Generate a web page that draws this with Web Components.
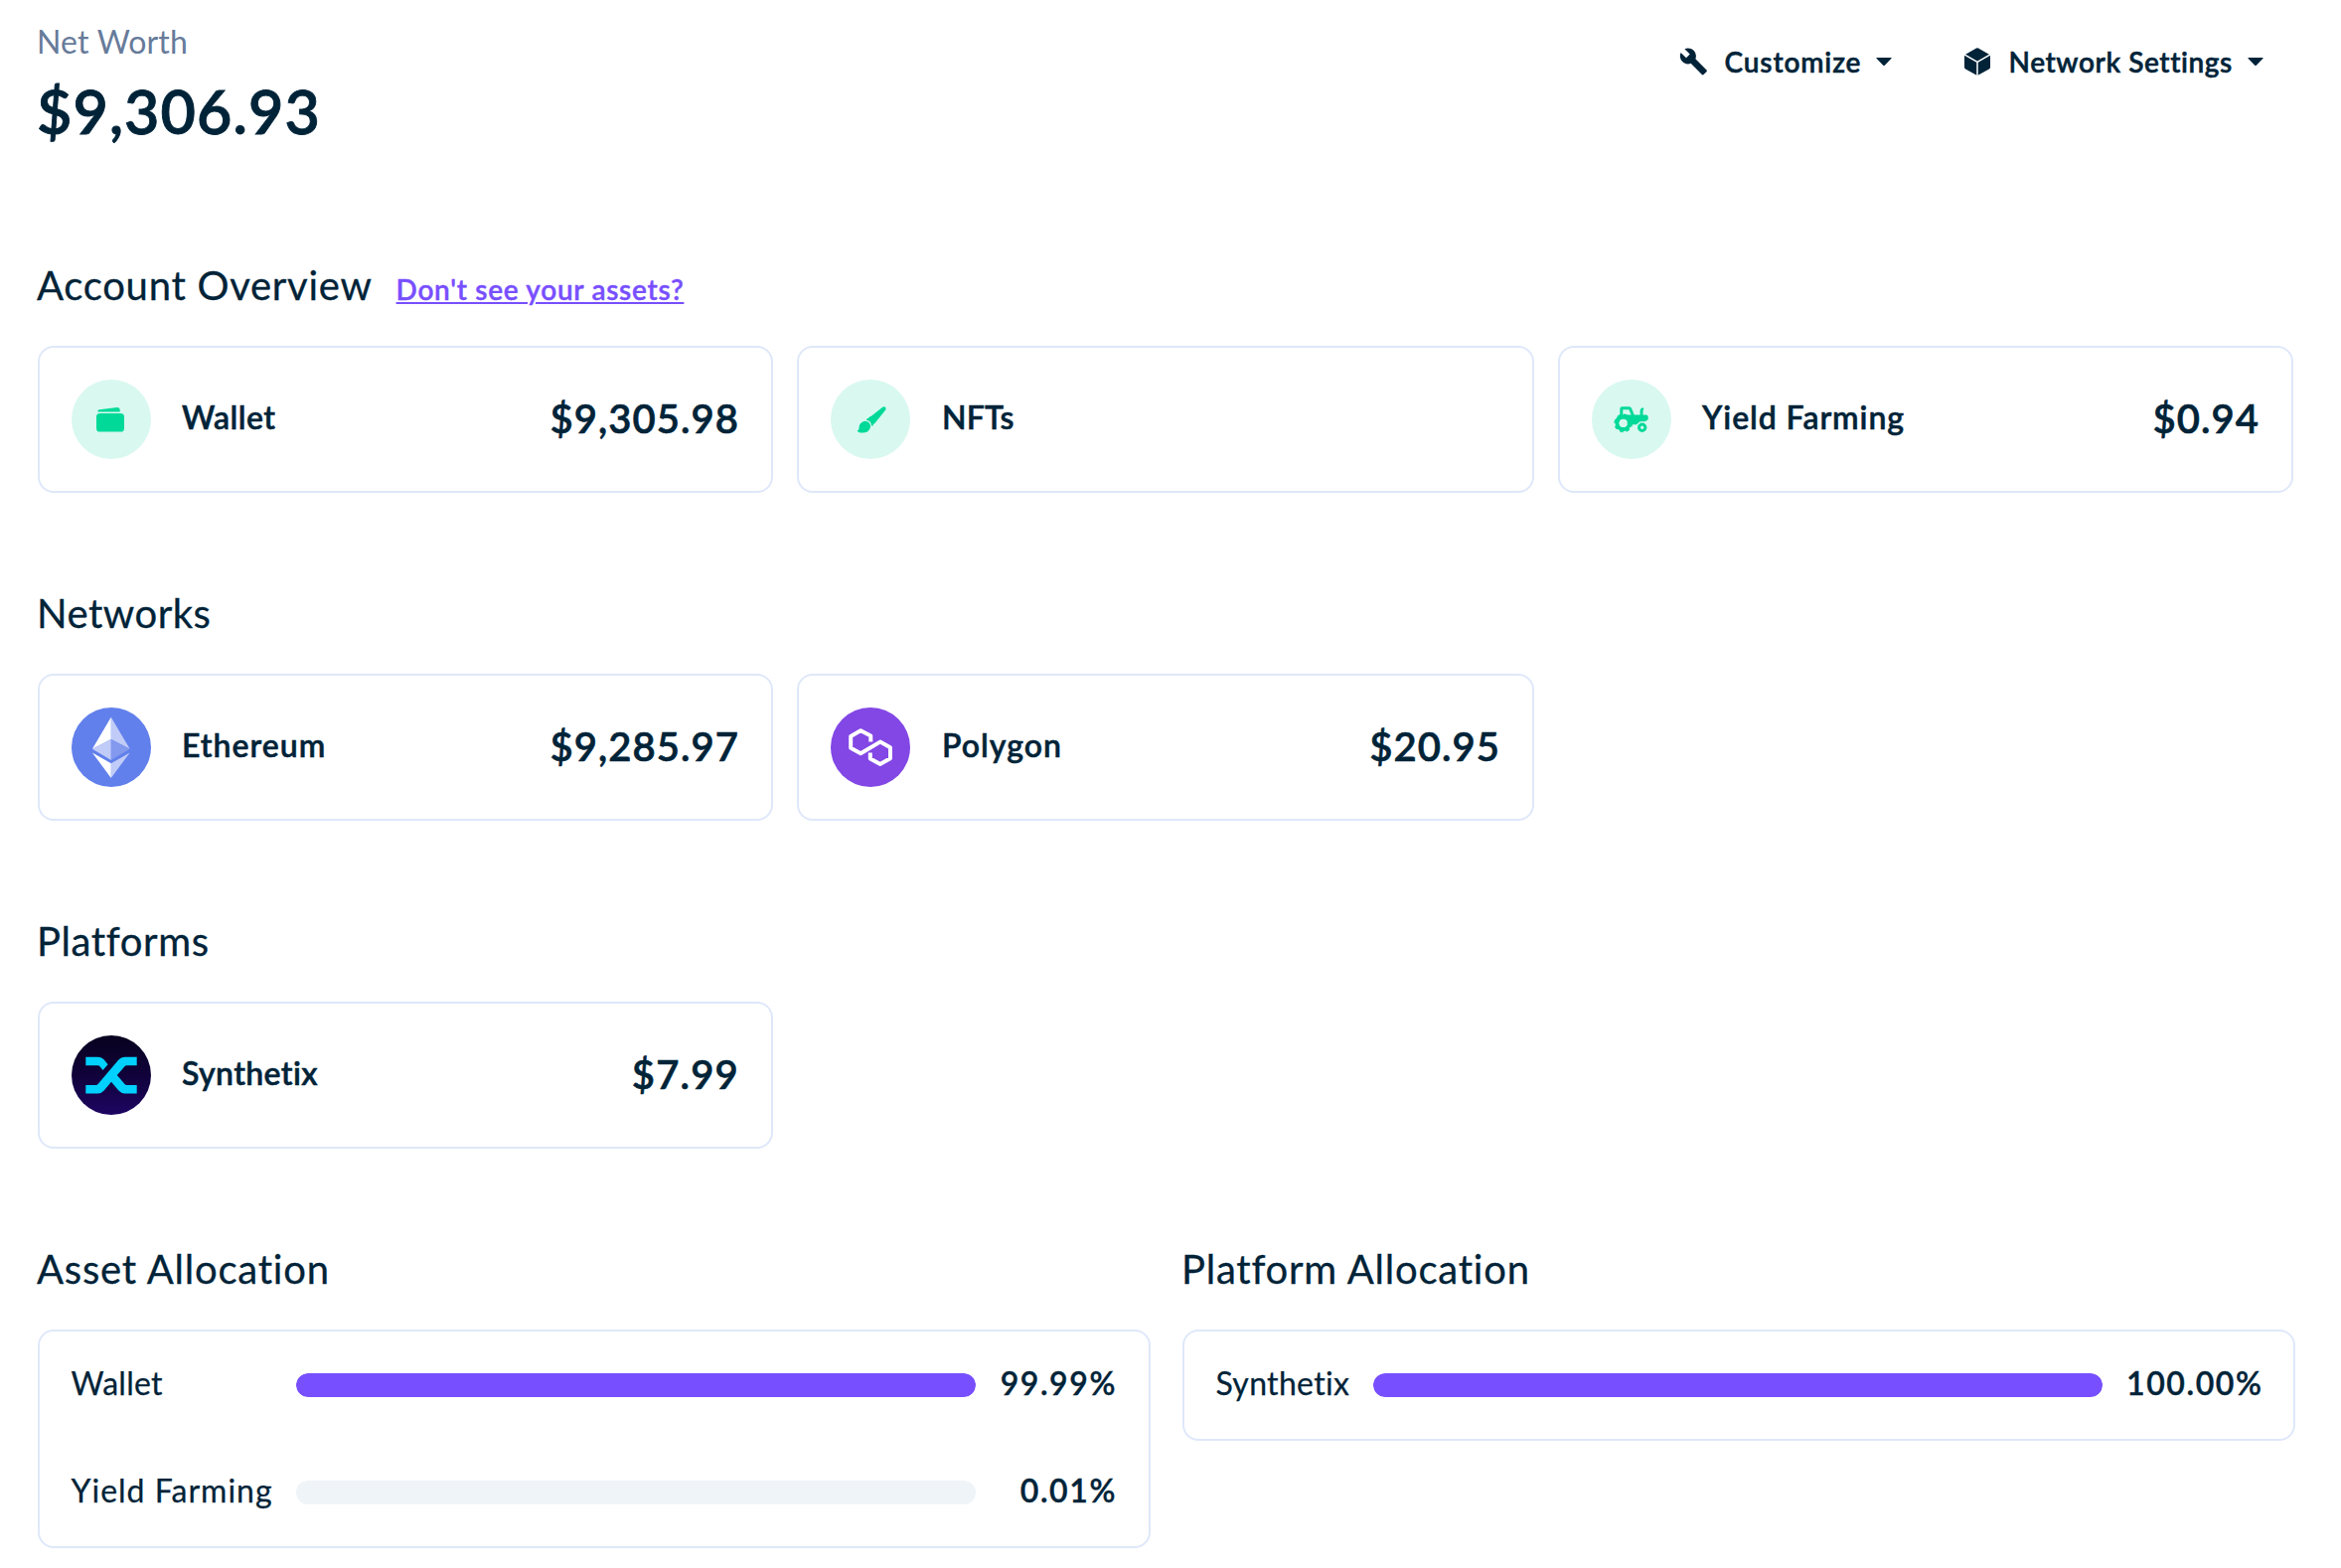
<!DOCTYPE html>
<html lang="en">
<head>
<meta charset="utf-8">
<title>Net Worth Dashboard</title>
<style>
  html, body { margin: 0; background: #fff; }
  body { color: #002338; font-family: Lato, "Open Sans", sans-serif; }
</style>
</head>
<body>
<net-dashboard></net-dashboard>

<script>
const ICONS = {
  wrench: `<svg width="28" height="28" viewBox="0 0 22.8 22.8" fill="currentColor"><path d="M22.4 18.3l-9.1-9.1c.9-2.3.4-5-1.5-6.9-2-2-5-2.4-7.4-1.3l4.3 4.3-3 3-4.4-4.3C.1 6.4.6 9.4 2.6 11.4c1.9 1.9 4.6 2.4 6.9 1.5l9.1 9.1c.4.4 1 .4 1.4 0l2.3-2.3c.5-.4.5-1.1.1-1.4z"/></svg>`,
  cube: `<svg width="26" height="28" viewBox="0 0 26 28"><path d="M12 .6q1-.7 2 0l10.9 6.2q1.1.6 1.1 2v10.6q0 1.3-1.1 2L14 27.500q-1 .6-2 0L1.100 21.400q-1.100-.7-1.100-2V8.800q0-1.400 1.100-2z" fill="currentColor"/><path d="M0 6.900L13 14.300 26 6.900M13 14.300V28" fill="none" stroke="#fff" stroke-width="1.500"/></svg>`,
  caret: `<svg width="16" height="8" viewBox="0 0 16 8"><path d="M.8 0H15.200Q16 .2 15.300 1L9 7.400Q8 8.400 7 7.400L.7 1Q0 .2.8 0z" fill="currentColor"/></svg>`,
  wallet: `<svg viewBox="0 0 80 80"><circle cx="40" cy="40" r="40" fill="#d9f8f0"/><g fill="#00d998"><path d="M26.400 31.200Q26.600 30.700 28 30.300L46 27.900Q48.500 27.900 48.700 30.500V32.400H27Q26 32.200 26.400 31.200z"/><rect x="25" y="33.900" width="28" height="18.600" rx="3.600"/></g></svg>`,
  brush: `<svg viewBox="0 0 80 80"><circle cx="40" cy="40" r="40" fill="#d9f8f0"/><g fill="#00d998"><path d="M52.300 27.700Q53.800 26.600 55 27.700 56.100 28.800 55.300 30.400L44.200 44.200 43.200 44.600 42.300 46.700 40.900 46.300Q41.300 42 36 40.700L36.300 39.400 38.700 38.300 39.300 37.200 40.600 37z"/><path d="M34.600 41.700Q39.600 42 40.200 47.200 39.600 50.500 37 52.400 33 54.200 28.200 52.900L26.600 51.600 28.300 50.400 28.800 46.200Q30.500 42.300 34.600 41.700z"/></g></svg>`,
  tractor: `<svg viewBox="0 0 80 80"><circle cx="40" cy="40" r="40" fill="#d9f8f0"/><g fill="#00d998"><path fill-rule="evenodd" d="M28.300 29.700Q28.300 27.300 30.700 27.300H37.500Q39.400 27.300 40.100 29L42.700 35.400H48.600V31.500Q48.600 29.700 49.800 28.900L50.500 28.400Q51.800 27.900 52.300 29.200 52.300 30 51.600 30.700L51.400 35.400H54.500Q56.700 35.400 56.700 37.500V39.500Q56.700 40.800 55.300 41.300L53 42.300Q48 41 45.500 45.300H31L24 39.500 28.300 35.500zM31.300 30.200V35.500H39.600L37.400 30.200z"/><circle cx="31.700" cy="43.900" r="6.200" fill="none" stroke="#00d998" stroke-width="4"/><circle cx="31.700" cy="43.900" r="8.500" fill="none" stroke="#00d998" stroke-width="1.600" stroke-dasharray="3.600 3.076"/><circle cx="50.700" cy="48.300" r="3.200" fill="none" stroke="#00d998" stroke-width="3"/></g><circle cx="31.700" cy="43.900" r="4.100" fill="#d9f8f0"/></svg>`,
  ethereum: `<svg viewBox="0 0 80 80"><circle cx="40" cy="40" r="40" fill="#6180eb"/><path d="M39.800 9.800L20.900 41.700 39.800 31.900z" fill="#fff"/><path d="M39.800 9.800L58.700 41.700 39.800 31.900z" fill="#c0cbf7"/><path d="M20.900 41.700L39.800 31.900V52.900z" fill="#c0cbf7"/><path d="M58.700 41.700L39.800 31.900V52.900z" fill="#8299ee"/><path d="M20.900 45.400L39.800 56.300V71z" fill="#fff"/><path d="M58.700 45.400L39.800 56.300V71z" fill="#c0cbf7"/></svg>`,
  polygon: `<svg viewBox="0 0 80 80"><circle cx="40" cy="40" r="40" fill="#8247e5"/><path d="M40.300 34.600V28.600L30.200 23.300 20.200 28.900V40.700L30.200 46.300 49.800 34.600 60 40.200V51.200L49.800 57 39.800 51.400V45.400" fill="none" stroke="#fff" stroke-width="4" stroke-linejoin="round"/></svg>`,
  synthetix: `<svg viewBox="0 0 80 80"><defs><linearGradient id="g" x1="0" y1="0" x2="0" y2="1"><stop offset="0" stop-color="#08021e"/><stop offset=".5" stop-color="#10023a"/><stop offset="1" stop-color="#1e0562"/></linearGradient></defs><circle cx="40" cy="40" r="40" fill="url(#g)"/><g fill="#00d1ff"><path d="M14.300 21.700H26.500Q30.500 21.700 32.800 24.600L36.600 29.300 31.600 35 28.300 31Q27.600 30.200 26.600 30.200H14.300z"/><path d="M65.700 21.700V30.200H55.500Q54.300 30.200 53.500 31.200L45.800 40 53.500 49Q54.300 50 55.500 50H65.700V58.400H53.500Q49.800 58.400 47.400 55.600L40 46.700 32.700 55.500Q30.300 58.400 26.500 58.400H14.300V50H24.600Q25.800 50 26.600 49L47.400 24.500Q49.800 21.700 53.500 21.700z"/></g></svg>`
};

/* Attaches an open shadow root holding the given markup. */
function mount(host, html) {
  host.attachShadow({ mode: 'open' }).innerHTML = html;
}

customElements.define('ui-icon', class extends HTMLElement {
  connectedCallback() {
    mount(this, `<style>:host{display:block;flex:none}svg{display:block}</style>${ICONS[this.getAttribute('name')]}`);
  }
});

/* Dropdown trigger: icon, label, caret. */
customElements.define('menu-button', class extends HTMLElement {
  connectedCallback() {
    mount(this, `<style>
      :host{display:flex;align-items:center;height:40px;font-size:28px;font-weight:600;line-height:40px;-webkit-text-stroke:.5px}
      .label{white-space:nowrap;flex:1;padding-bottom:1px}
    </style>
    <ui-icon name="${this.getAttribute('icon')}"></ui-icon>
    <span class="label"><slot></slot></span>
    <ui-icon name="caret"></ui-icon>`);
  }
});

customElements.define('net-worth', class extends HTMLElement {
  connectedCallback() {
    mount(this, `<style>
      :host{display:flex;flex-direction:column;gap:14px}
      .title{font-size:32px;line-height:40px;color:#677b9a;letter-spacing:.18px;margin-left:-1px}
      .value{font-size:61px;line-height:72px;font-weight:600;letter-spacing:1.09px;margin-left:-1px;-webkit-text-stroke:.9px}
    </style>
    <div class="title">Net Worth</div>
    <div class="value"><slot></slot></div>`);
  }
});

/* Section with a heading row (title plus optional link) above its content. */
customElements.define('page-section', class extends HTMLElement {
  connectedCallback() {
    mount(this, `<style>
      :host{display:block}
      .head{display:flex;align-items:baseline;height:46px;padding-top:1px;margin:0 0 38px -1px;font-size:40px;line-height:46px;white-space:nowrap}
      h2{margin:0;font:inherit;letter-spacing:var(--track,.6px);-webkit-text-stroke:.3px}
    </style>
    <div class="head"><h2>${this.getAttribute('heading')}</h2><slot name="link"></slot></div>
    <slot></slot>`);
  }
});

customElements.define('help-link', class extends HTMLElement {
  connectedCallback() {
    mount(this, `<style>
      :host{display:block;margin-left:24px;font-size:28px;font-weight:600;letter-spacing:.7px;-webkit-text-stroke:.4px}
      a{color:#784fff;text-decoration:underline;text-decoration-thickness:2px;text-underline-offset:2px}
    </style><a><slot></slot></a>`);
  }
});

customElements.define('card-grid', class extends HTMLElement {
  connectedCallback() {
    mount(this, `<style>:host{display:grid;grid-template-columns:1fr 742px 1fr;gap:24px;width:2270px}</style><slot></slot>`);
  }
});

customElements.define('balance-card', class extends HTMLElement {
  connectedCallback() {
    mount(this, `<style>
      :host{display:flex;align-items:center;box-sizing:border-box;height:148px;padding:0 32px;border:2px solid #dfe8fa;border-radius:16px;font-weight:600;white-space:nowrap}
      ui-icon{width:80px;height:80px;margin-right:var(--gap,31px)}
      .name{flex:1;font-size:32px;line-height:40px;padding-bottom:5px;letter-spacing:var(--track);-webkit-text-stroke:.5px}
      .amount{font-size:40px;line-height:48px;padding-bottom:2px;letter-spacing:var(--amount-track,1.05px);-webkit-text-stroke:.6px}
    </style>
    <ui-icon name="${this.getAttribute('icon')}"></ui-icon>
    <span class="name"><slot></slot></span>
    <span class="amount">${this.getAttribute('amount') || ''}</span>`);
  }
});

customElements.define('allocation-panel', class extends HTMLElement {
  connectedCallback() {
    mount(this, `<style>:host{display:block;border:2px solid #dfe8fa;border-radius:16px;padding:0 32px}</style><slot></slot>`);
  }
});

customElements.define('allocation-row', class extends HTMLElement {
  connectedCallback() {
    const pct = this.getAttribute('percent');
    mount(this, `<style>
      :host{display:grid;grid-template-columns:var(--cols);column-gap:24px;align-items:center;height:108px;font-size:32px;line-height:40px;white-space:nowrap}
      .name{padding-bottom:4px;margin-left:-.5px;letter-spacing:var(--track);-webkit-text-stroke:.25px}
      .bar{height:24px;border-radius:12px;background:#eff4f8;overflow:hidden}
      .fill{height:100%;border-radius:12px;background:#784fff;width:${parseFloat(pct) < 1 ? 0 : 100}%}
      .pct{padding-bottom:4px;text-align:right;font-weight:600;letter-spacing:1.6px;-webkit-text-stroke:.4px}
    </style>
    <span class="name"><slot></slot></span>
    <div class="bar"><div class="fill"></div></div>
    <span class="pct">${pct}</span>`);
  }
});

customElements.define('net-dashboard', class extends HTMLElement {
  connectedCallback() {
    mount(this, `<style>
      :host{display:block;box-sizing:border-box;height:1578px;padding:22px 46px 0 38px;overflow:hidden}
      header{display:flex;justify-content:space-between;align-items:flex-start;height:241px}
      nav{display:flex;gap:73px;padding:20px 32px 0 0}
      main{display:flex;flex-direction:column;gap:97px}
      .split{display:grid;grid-template-columns:1120px 1120px;gap:32px;align-items:start}
    </style>
    <header>
      <net-worth>$9,306.93</net-worth>
      <nav>
        <menu-button icon="wrench" style="width:214px;letter-spacing:.86px"><span style="margin-left:17.500px">Customize</span></menu-button>
        <menu-button icon="cube" style="width:301px;letter-spacing:.59px"><span style="margin-left:18.500px">Network Settings</span></menu-button>
      </nav>
    </header>
    <main>
      <page-section heading="Account Overview" style="--track:.73px">
        <help-link slot="link">Don't see your assets?</help-link>
        <card-grid>
          <balance-card icon="wallet" amount="$9,305.98" style="--track:.47px">Wallet</balance-card>
          <balance-card icon="brush" style="--track:.16px;--gap:32px">NFTs</balance-card>
          <balance-card icon="tractor" amount="$0.94" style="--track:.92px">Yield Farming</balance-card>
        </card-grid>
      </page-section>
      <page-section heading="Networks" style="--track:.52px">
        <card-grid>
          <balance-card icon="ethereum" amount="$9,285.97" style="--track:1.02px">Ethereum</balance-card>
          <balance-card icon="polygon" amount="$20.95" style="--track:1.02px;--gap:32px">Polygon</balance-card>
        </card-grid>
      </page-section>
      <page-section heading="Platforms" style="--track:.61px">
        <card-grid>
          <balance-card icon="synthetix" amount="$7.99" style="--track:.38px;--amount-track:1.200px">Synthetix</balance-card>
        </card-grid>
      </page-section>
      <div class="split">
        <page-section heading="Asset Allocation" style="--track:.79px">
          <allocation-panel style="--cols:202px 1fr 118px">
            <allocation-row percent="99.99%" style="--track:.3px">Wallet</allocation-row>
            <allocation-row percent="0.01%" style="--track:1px">Yield Farming</allocation-row>
          </allocation-panel>
        </page-section>
        <page-section heading="Platform Allocation" style="--track:.78px">
          <allocation-panel style="--cols:134px 1fr 136px">
            <allocation-row percent="100.00%" style="--track:.32px">Synthetix</allocation-row>
          </allocation-panel>
        </page-section>
      </div>
    </main>`);
  }
});
</script>
</body>
</html>
